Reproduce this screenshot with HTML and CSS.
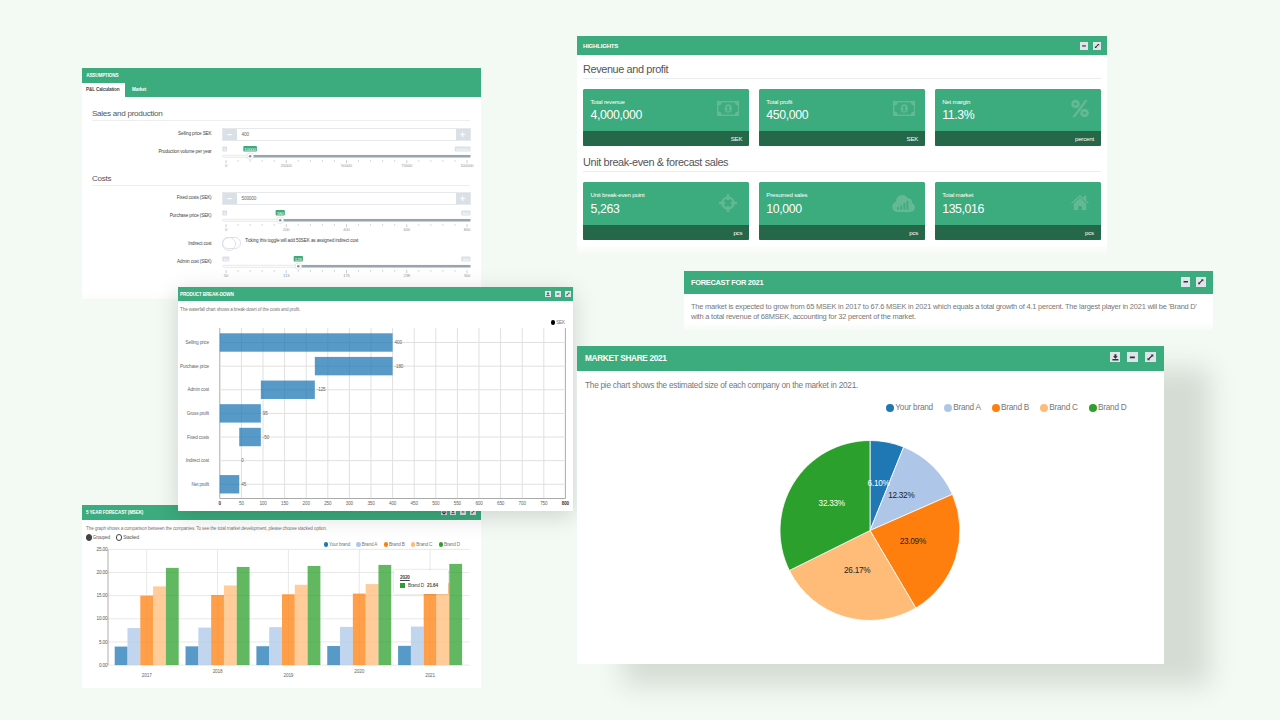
FILE: index.html
```html
<!DOCTYPE html>
<html lang="en">
<head>
  <meta charset="utf-8">
  <title>Market dashboard</title>
  <link rel="stylesheet" href="styles.css">
</head>
<body>

  <!-- shared icons -->
  <svg class="defs" width="0" height="0">
    <symbol id="download" viewBox="0 0 10 10"><path d="M4.1 2h1.8v2h1.4L5 6.300 2.700 4h1.400zM2.200 6.500h5.600v1.400H2.200z"/></symbol>
    <symbol id="minus" viewBox="0 0 10 10"><path d="M2.700 4.200h4.600v1.500H2.700z"/></symbol>
    <symbol id="expand" viewBox="0 0 10 10"><path d="M5.400 2.400h2.300v2.300L6.900 3.900 4 6.800l.7.8H2.300V5.300l.8.7 2.900-2.900z"/></symbol>
    <symbol id="print" viewBox="0 0 10 10"><path d="M2.500 1.500h5v2h-5zM1.300 4h7.400v3.200H7.500V6h-5v1.200H1.300zM3 6.600h4v2H3z"/></symbol>
    <symbol id="money" viewBox="0 0 30 20">
      <path fill-rule="evenodd" d="M0 0h30v20H0zM6 2a4 4 0 0 1-4 4v8a4 4 0 0 1 4 4h18a4 4 0 0 1 4-4V6a4 4 0 0 1-4-4zM15 4.200a4.800 5.800 0 1 1 0 11.600a4.800 5.800 0 1 1 0-11.600zM14.200 6.500l-2 1.700 1 1.100.8-.6v3.800h-1.500v1.300h5v-1.300H16v-6z"/>
    </symbol>
    <symbol id="target" viewBox="0 0 24 24">
      <circle cx="12" cy="12" r="7.500" fill="none" stroke="currentColor" stroke-width="3"/>
      <path d="M10.300 0h3.400v8h-3.400zM10.300 16h3.400v8h-3.400zM0 10.300h8v3.400H0zM16 10.300h8v3.400h-8z"/>
    </symbol>
    <symbol id="percent" viewBox="0 0 24 24">
      <circle cx="6" cy="6" r="3.800" fill="none" stroke="currentColor" stroke-width="4"/>
      <circle cx="18" cy="18" r="3.800" fill="none" stroke="currentColor" stroke-width="4"/>
      <path d="M18.500 0.500H22.500L5.500 23.500H1.500z"/>
    </symbol>
    <symbol id="cloud" viewBox="0 0 30 22">
      <circle cx="7" cy="15.200" r="6.800"/>
      <circle cx="13.500" cy="8.500" r="8.500"/>
      <circle cx="21" cy="9" r="5"/>
      <circle cx="24" cy="16" r="6"/>
      <path d="M7 10h17v12H7z"/>
      <path class="cloud-bars" d="M7 15.500h2.200V19H7zM11 13.500h2.200V19H11zM15 10.500h2.200V19H15zM19 7.500h2.200V19H19z"/>
    </symbol>
    <symbol id="home" viewBox="0 0 24 20">
      <path d="M12 0l5 4.300V1h3.300v6.200L24 10.500l-1.300 1.300L12 2.700 1.300 11.800 0 10.500zM12 4l8.300 7.200V20h-6v-5.500H9.700V20h-6v-8.800z"/>
    </symbol>
  </svg>

  <section class="panel assumptions">
    <header class="panel-head"><h2>ASSUMPTIONS</h2></header>
    <nav class="tabs">
      <span class="tab active">P&amp;L Calculation</span>
      <span class="tab">Market</span>
    </nav>
    <div class="form">
      <h3>Sales and production</h3>
      <div class="row number-row">
        <label>Selling price SEK</label>
        <div class="number"><b>&minus;</b><span>400</span><b>+</b></div>
      </div>
      <div class="row slider-row">
        <label>Production volume per year</label>
        <svg class="slider" data-min="0" data-max="100000" data-value="10000"></svg>
      </div>
      <h3 class="costs">Costs</h3>
      <div class="row number-row">
        <label>Fixed costs (SEK)</label>
        <div class="number"><b>&minus;</b><span>500000</span><b>+</b></div>
      </div>
      <div class="row slider-row">
        <label>Purchase price (SEK)</label>
        <svg class="slider" data-min="0" data-max="800" data-value="180"></svg>
      </div>
      <div class="row toggle-row">
        <label>Indirect cost</label>
        <div class="toggle-field"><i class="toggle"></i><span>Ticking this toggle will add 50SEK as assigned indirect cost</span></div>
      </div>
      <div class="row slider-row">
        <label>Admin cost (SEK)</label>
        <svg class="slider" data-min="50" data-max="300" data-value="125"></svg>
      </div>
    </div>
  </section>

  <section class="panel forecast-chart">
    <header class="panel-head">
      <h2>5 YEAR FORECAST (MSEK)</h2>
      <div class="tools">
        <svg><use href="#print"/></svg><svg><use href="#download"/></svg><svg><use href="#minus"/></svg><svg><use href="#expand"/></svg>
      </div>
    </header>
    <p>The graph shows a comparison between the companies. To see the total market development, please choose stacked option.</p>
    <div class="modes"><span class="on">Grouped</span><span>Stacked</span></div>
    <div class="legend" id="barLegend"></div>
    <svg id="bars" width="399" height="139"></svg>
    <div class="tooltip">
      <u>2020</u>
      <div><i></i>Brand D <b>21.64</b></div>
    </div>
  </section>

  <section class="panel breakdown">
    <header class="panel-head">
      <h2>PRODUCT BREAK-DOWN</h2>
      <div class="tools">
        <svg><use href="#download"/></svg><svg><use href="#minus"/></svg><svg><use href="#expand"/></svg>
      </div>
    </header>
    <p>The waterfall chart shows a break-down of the costs and profit.</p>
    <div class="legend"><span><i class="black"></i>SEK</span></div>
    <svg id="waterfall" width="394" height="184"></svg>
  </section>

  <section class="panel highlights">
    <header class="panel-head">
      <h2>HIGHLIGHTS</h2>
      <div class="tools"><svg><use href="#minus"/></svg><svg><use href="#expand"/></svg></div>
    </header>
    <h3>Revenue and profit</h3>
    <div class="cards">
      <div class="card">
        <div class="card-body"><div><small>Total revenue</small><strong>4,000,000</strong></div><svg class="money"><use href="#money"/></svg></div>
        <footer>SEK</footer>
      </div>
      <div class="card">
        <div class="card-body"><div><small>Total profit</small><strong>450,000</strong></div><svg class="money"><use href="#money"/></svg></div>
        <footer>SEK</footer>
      </div>
      <div class="card">
        <div class="card-body"><div><small>Net margin</small><strong>11.3%</strong></div><svg class="percent"><use href="#percent"/></svg></div>
        <footer>percent</footer>
      </div>
    </div>
    <h3>Unit break-even &amp; forecast sales</h3>
    <div class="cards">
      <div class="card">
        <div class="card-body"><div><small>Unit break-even point</small><strong>5,263</strong></div><svg class="target"><use href="#target"/></svg></div>
        <footer>pcs</footer>
      </div>
      <div class="card">
        <div class="card-body"><div><small>Presumed sales</small><strong>10,000</strong></div><svg class="cloud"><use href="#cloud"/></svg></div>
        <footer>pcs</footer>
      </div>
      <div class="card">
        <div class="card-body"><div><small>Total market</small><strong>135,016</strong></div><svg class="home"><use href="#home"/></svg></div>
        <footer>pcs</footer>
      </div>
    </div>
  </section>

  <section class="panel summary">
    <header class="panel-head">
      <h2>FORECAST FOR 2021</h2>
      <div class="tools"><svg><use href="#minus"/></svg><svg><use href="#expand"/></svg></div>
    </header>
    <p>The market is expected to grow from 65 MSEK in 2017 to 67.6 MSEK in 2021 which equals a total growth of 4.1 percent. The largest player in 2021 will be 'Brand D'<br>with a total revenue of 68MSEK, accounting for 32 percent of the market.</p>
  </section>

  <section class="panel share">
    <header class="panel-head">
      <h2>MARKET SHARE 2021</h2>
      <div class="tools"><svg><use href="#download"/></svg><svg><use href="#minus"/></svg><svg><use href="#expand"/></svg></div>
    </header>
    <p>The pie chart shows the estimated size of each company on the market in 2021.</p>
    <div class="legend" id="pieLegend"></div>
    <svg id="pie" width="587" height="240"></svg>
  </section>

  <script src="charts.js"></script>
</body>
</html>
```

FILE: styles.css
```css
* {
  box-sizing: border-box;
}

body {
  margin: 0;
  width: 1280px;
  height: 720px;
  position: relative;
  overflow: hidden;
  background-color: #f3faf3;
  font-family: "Liberation Sans", Arial, sans-serif;
  color: #555;
}

h2, h3, p {
  margin: 0;
  font-weight: normal;
  white-space: nowrap;
}

.defs {
  position: absolute;
}

/* panels float freely over the canvas */
.panel {
  position: absolute;
  background-color: #fff;
  letter-spacing: -0.03em;
}

.panel h3 {
  letter-spacing: -0.035em;
}

.panel-head {
  display: flex;
  align-items: center;
  justify-content: space-between;
  background-color: #3cab7d;
  color: #fff;
}

.panel-head h2 {
  font-size: inherit;
  font-weight: bold;
  letter-spacing: -0.04em;
}

.tools {
  display: flex;
}

.tools svg {
  background-color: #dfe4ea;
  fill: #333;
}

.panel p {
  color: #777;
}

.legend {
  display: flex;
  justify-content: flex-end;
  color: #777;
}

.legend span {
  display: flex;
  align-items: center;
}

.legend i {
  flex: none;
  border-radius: 50%;
}

.legend .black {
  background-color: #000;
}

/* assumptions */
.assumptions {
  left: 81.5px;
  top: 68.4px;
  width: 399px;
  height: 231px;
  font-size: 4.65px;
  background: linear-gradient(#fff 96%, #fafcfa);
}

.assumptions .panel-head {
  height: 14.5px;
  padding-left: 4.8px;
}

.tabs {
  display: flex;
  height: 14.2px;
  background-color: #3cab7d;
}

.tab {
  padding: 0 6px 0 4.5px;
  line-height: 14px;
  font-weight: bold;
  letter-spacing: -0.03em;
  white-space: nowrap;
  color: #fff;
}

.tab.active {
  width: 43.5px;
  padding-right: 0;
  margin-right: 2.5px;
  background-color: #fff;
  color: #444;
}

.form {
  padding: 11px 10.5px 0;
}

.form h3 {
  height: 13px;
  line-height: 12px;
  font-size: 8.1px;
  color: #555;
  border-bottom: 1px solid #eceef0;
}

.row {
  display: grid;
  grid-template-columns: 119.5px 249px;
  column-gap: 10px;
}

.row label {
  text-align: right;
  color: #444;
}

.number-row {
  margin-top: 6.5px;
}

.number-row label {
  line-height: 12.5px;
}

.number {
  display: flex;
  height: 13px;
  border: 1px solid #e6e9ec;
  line-height: 12px;
}

.number b {
  width: 14px;
  background-color: #d9e0e8;
  color: #fff;
  font-size: 9.5px;
  line-height: 11px;
  text-align: center;
}

.number span {
  flex: 1;
  padding-left: 5px;
  color: #666;
}

.slider-row {
  margin-top: 5px;
}

.slider-row label {
  line-height: 11.5px;
}

.slider {
  width: 249px;
  height: 23px;
  overflow: visible;
}

.form .costs {
  margin-top: 4px;
}

.toggle-row {
  margin-top: 3.5px;
}

.toggle-row label {
  line-height: 13px;
}

.toggle-field {
  display: flex;
  height: 13px;
  gap: 4.5px;
  line-height: 7px;
  color: #444;
  white-space: nowrap;
}

.toggle {
  width: 19px;
  height: 12.5px;
  border: 1px solid #e0e3e6;
  border-radius: 7px;
}

.toggle::before {
  content: "";
  display: block;
  width: 12px;
  height: 12px;
  margin: -0.75px 0 0 -1px;
  border: 1px solid #dcdfe2;
  border-radius: 50%;
}

.toggle-row + .slider-row {
  margin-top: 6.8px;
}

/* five year forecast */
.forecast-chart {
  left: 81.5px;
  top: 505px;
  width: 399px;
  height: 183px;
  font-size: 4.65px;
}

.forecast-chart .panel-head {
  height: 14.5px;
  padding: 0 4.5px;
}

.forecast-chart .tools,
.breakdown .tools {
  gap: 3.8px;
}

.forecast-chart .tools svg,
.breakdown .tools svg {
  width: 6px;
  height: 6px;
}

.forecast-chart p {
  padding-left: 4.5px;
  line-height: 17px;
}

.modes {
  display: flex;
  gap: 6px;
  height: 2px;
  padding-left: 4px;
  line-height: 2px;
  color: #555;
}

.modes span {
  display: flex;
  align-items: center;
}

.modes span::before {
  content: "";
  flex: none;
  width: 4.5px;
  height: 4.5px;
  margin-right: 0.8px;
  border: 0.9px solid #444;
  border-radius: 50%;
}

.modes .on::before {
  background-color: #444;
}

.forecast-chart .legend {
  gap: 6.3px;
  height: 5px;
  margin-top: 3.3px;
  padding-right: 20.5px;
}

.forecast-chart .legend i,
.breakdown .legend i {
  width: 4.5px;
  height: 4.5px;
  margin-right: 0.8px;
}

#bars,
#waterfall,
#pie {
  display: block;
}

.tooltip {
  position: absolute;
  left: 312.5px;
  top: 65px;
  width: 53.5px;
  height: 23.5px;
  padding: 5.3px 6px;
  background-color: #fff;
  border-radius: 1px;
  box-shadow: 0 0 2px rgba(0, 0, 0, 0.25);
  line-height: 5.5px;
  color: #444;
}

.tooltip u {
  display: block;
  font-weight: bold;
}

.tooltip div {
  display: flex;
  align-items: center;
  margin-top: 2.2px;
  white-space: nowrap;
}

.tooltip i {
  width: 4.5px;
  height: 4.5px;
  margin-right: 3.5px;
  background-color: #2ca02c;
}

.tooltip b {
  margin-left: 3px;
}

/* product break-down */
.breakdown {
  left: 178px;
  top: 287.4px;
  width: 394.5px;
  height: 224px;
  font-size: 4.65px;
  box-shadow: 0 5px 22px rgba(0, 0, 0, 0.16);
}

.breakdown .panel-head {
  height: 14px;
  padding: 0 2px;
}

.breakdown p {
  padding-left: 2px;
  line-height: 17.6px;
}

.breakdown .legend {
  height: 5px;
  margin-top: 1.2px;
  padding-right: 7.5px;
}

/* highlights */
.highlights {
  left: 577px;
  top: 36.4px;
  width: 530px;
  height: 218px;
  font-size: 6.1px;
  background: linear-gradient(#fff 95%, #f6faf6);
}

.highlights .panel-head {
  height: 18.6px;
  padding: 0 6px;
}

.highlights .tools {
  gap: 5px;
}

.highlights .tools svg {
  width: 8px;
  height: 8px;
}

.highlights h3 {
  margin: 6px 6px 0;
  height: 18px;
  line-height: 17px;
  font-size: 10.9px;
  color: #555;
  border-bottom: 1px solid #e8eef2;
}

.cards {
  display: grid;
  grid-template-columns: repeat(3, 1fr);
  gap: 9.5px;
  margin: 10.3px 6px 7.8px;
}

.card {
  overflow: hidden;
  border-radius: 1.5px;
  background-color: #3cab7d;
  color: #fff;
}

.card-body {
  display: flex;
  justify-content: space-between;
  height: 41.5px;
  padding: 8.5px 10px 0 7.5px;
}

.card small {
  display: block;
  font-size: 6.1px;
  line-height: 7px;
}

.card strong {
  display: block;
  margin-top: 2.5px;
  font-size: 12.3px;
  font-weight: normal;
  letter-spacing: -0.03em;
  line-height: 16px;
}

.card svg {
  fill: currentColor;
  color: #63b992;
}

.cloud-bars {
  fill: #3cab7d;
}

.card footer {
  height: 15px;
  padding-right: 7px;
  line-height: 15px;
  text-align: right;
  background-color: #246749;
}

.money {
  width: 22.5px;
  height: 15px;
  margin-top: 3.5px;
}

.percent {
  width: 18px;
  height: 19px;
  margin: 1.5px 2px 0 0;
}

.target {
  width: 18px;
  height: 18px;
  margin: 3px 2px 0 0;
}

.cloud {
  width: 23px;
  height: 17px;
  margin-top: 4px;
}

.home {
  width: 18px;
  height: 15px;
  margin: 4px 2px 0 0;
}

.highlights h3 ~ h3 {
  margin-top: 8px;
}

.highlights h3 ~ h3 + .cards .card-body {
  height: 42.5px;
  padding-top: 9px;
}

/* text summary */
.summary {
  left: 683.5px;
  top: 271px;
  width: 529.5px;
  height: 58.5px;
  font-size: 7.45px;
  background: linear-gradient(#fff 85%, #f8fbf8);
}

.summary .panel-head {
  height: 22.5px;
  padding: 0 7.5px;
}

.summary .tools {
  gap: 6px;
  margin-top: -1px;
}

.summary .tools svg {
  width: 9.5px;
  height: 9.5px;
}

.summary p {
  padding: 8.3px 7.5px;
  line-height: 10.2px;
  letter-spacing: -0.028em;
}

/* market share */
.share {
  left: 577px;
  top: 346px;
  width: 587px;
  height: 318px;
  font-size: 8.25px;
  box-shadow: 46px 22px 25px #d4dcd4;
}

.share .panel-head {
  height: 25px;
  padding: 0 8px;
}

.share .tools {
  gap: 7px;
  margin-top: -3px;
}

.share .tools svg {
  width: 10.8px;
  height: 10.8px;
}

.share p {
  padding-left: 8px;
  line-height: 29px;
}

.share .legend {
  gap: 11px;
  height: 10px;
  margin-top: 2.5px;
  padding-right: 37.5px;
}

.share .legend i {
  width: 8px;
  height: 8px;
  margin-right: 1.2px;
}
```

FILE: charts.js
```js
const brands = ["Your brand", "Brand A", "Brand B", "Brand C", "Brand D"];
const colors = ["#1f77b4", "#aec7e8", "#ff7f0e", "#ffbb78", "#2ca02c"];

function rect(x, y, w, h, fill, extra) {
  return `<rect x="${x}" y="${y}" width="${w}" height="${h}" fill="${fill}" ${extra || ""}/>`;
}

function line(x1, y1, x2, y2, stroke, width) {
  return `<line x1="${x1}" y1="${y1}" x2="${x2}" y2="${y2}" stroke="${stroke}" stroke-width="${width || 1}"/>`;
}

function text(x, y, value, size, fill, anchor, extra) {
  return `<text x="${x}" y="${y}" font-size="${size}" fill="${fill}" text-anchor="${anchor}" ${extra || ""}>${value}</text>`;
}

// legends
for (const id of ["barLegend", "pieLegend"]) {
  document.getElementById(id).innerHTML = brands.map((name, i) =>
    `<span><i style="background:${colors[i]}"></i>${name}</span>`).join("");
}

// range sliders
document.querySelectorAll(".slider").forEach(svg => {
  const min = +svg.dataset.min;
  const max = +svg.dataset.max;
  const value = +svg.dataset.value;
  const start = 4, span = 241;
  const x = start + (value - min) / (max - min) * span;
  const badge = v => String(v).length * 2.2 + 2.6;
  let out = rect(0.5, 9.3, 247.5, 2, "#fff", 'stroke="#dfe2e5" stroke-width="0.8" rx="1"');
  out += rect(x, 9, 248.5 - x, 2.4, "#98a4b0");
  out += rect(0.3, 0.5, badge(min), 5, "#d9e0e8", 'rx="0.8"');
  out += text(0.3 + badge(min) / 2, 4.6, min, 4.4, "#fff", "middle");
  out += rect(248.5 - badge(max), 0.5, badge(max), 5, "#d9e0e8", 'rx="0.8"');
  out += text(248.5 - badge(max) / 2, 4.6, max, 4.4, "#fff", "middle");
  out += rect(x - badge(value) / 2, 0, badge(value), 5.6, "#3cab7d", 'rx="0.8"');
  out += text(x, 4.5, value, 4.4, "#fff", "middle");
  out += `<circle cx="${x}" cy="10.2" r="3.3" fill="#fff" stroke="#d8dce0" stroke-width="0.7"/>`;
  out += `<circle cx="${x}" cy="10.2" r="1.3" fill="#8794a1"/>`;
  for (let i = 0; i <= 20; i++) {
    const tx = start + span * i / 20;
    out += line(tx, 14.2, tx, i % 5 ? 15.8 : 17.2, "#b3b8be", 0.7);
    if (i % 5 === 0) {
      out += text(tx, 21.3, Math.round(min + (max - min) * i / 20), 4.2, "#999", "middle");
    }
  }
  svg.innerHTML = out;
});

// waterfall
const steps = [
  ["Selling price", 0, 400, "400"],
  ["Purchase price", 220, 400, "-180"],
  ["Admin cost", 95, 220, "-125"],
  ["Gross profit", 0, 95, "95"],
  ["Fixed costs", 45, 95, "-50"],
  ["Indirect cost", 45, 45, "0"],
  ["Net profit", 0, 45, "45"]
];
const wx = v => 41.8 + v * 0.432;
let waterfall = "";
for (let v = 0; v <= 800; v += 50) {
  const edge = v === 0 || v === 800;
  waterfall += line(wx(v), 3, wx(v), 173.5, edge ? "#aaa" : "#e0e0e0");
  waterfall += text(wx(v), 180.2, v, 4.6, edge ? "#333" : "#666", "middle", edge ? 'font-weight="bold"' : "");
}
steps.forEach(([name, from, to, label], i) => {
  const y = 17.5 + i * 23.63;
  waterfall += line(wx(0), y, wx(800), y, "#e0e0e0");
  waterfall += text(31, y + 1.6, name, 4.65, "#666", "end");
  waterfall += rect(wx(from), y - 9.2, wx(to) - wx(from), 18.4, "#1f77b4", 'opacity="0.75"');
  waterfall += text(wx(to) + 2, y + 1.6, label, 4.6, "#666", "start");
});
waterfall += line(wx(0), 173.5, wx(800), 173.5, "#aaa");
document.getElementById("waterfall").innerHTML = waterfall;

// grouped bars
const forecast = {
  2017: [4, 8, 15, 17, 21],
  2018: [4.05, 8.1, 15.15, 17.2, 21.2],
  2019: [4.08, 8.2, 15.3, 17.35, 21.42],
  2020: [4.12, 8.25, 15.45, 17.5, 21.64],
  2021: [4.16, 8.33, 15.6, 17.7, 21.86]
};
const by = v => 118.1 - v * 4.63;
let bars = "";
for (let v = 0; v <= 25; v += 5) {
  bars += line(26, by(v), 387.5, by(v), "#e8e8e8");
  bars += text(25.5, by(v) + 1.6, v.toFixed(2), 4.65, "#555", "end");
}
Object.keys(forecast).forEach((year, g) => {
  const cx = 64.7 + g * 70.85;
  bars += line(cx, by(25), cx, by(0), "#e8e8e8");
  forecast[year].forEach((v, i) => {
    bars += rect(cx - 32 + i * 12.8, by(v), 12.8, by(0) - by(v), colors[i], 'opacity="0.75"');
  });
  bars += text(cx, g % 2 ? 126 : 130.3, year, 4.65, "#666", "middle");
});
bars += line(26, by(25), 26, by(0), "#999", 0.8);
document.getElementById("bars").innerHTML = bars;

// pie
const shares = [6.10, 12.32, 23.09, 26.17, 32.33];
const cx = 293, cy = 117.5, r = 90;
let angle = 0, slices = "", labels = "";
shares.forEach((share, i) => {
  const next = angle + share / 100.01 * Math.PI * 2;
  const mid = (angle + next) / 2;
  const p = (a, d) => `${cx + Math.sin(a) * d} ${cy - Math.cos(a) * d}`;
  slices += `<path d="M${cx} ${cy}L${p(angle, r)}A${r} ${r} 0 0 1 ${p(next, r)}Z" fill="${colors[i]}" stroke="#fff" stroke-width="0.8"/>`;
  labels += text(cx + Math.sin(mid) * r / 2, cy - Math.cos(mid) * r / 2 - 0.3, share.toFixed(2) + "%", 8.2, i === 0 || i === 4 ? "#fff" : "#222", "middle");
  angle = next;
});
document.getElementById("pie").innerHTML = slices + labels;
```
